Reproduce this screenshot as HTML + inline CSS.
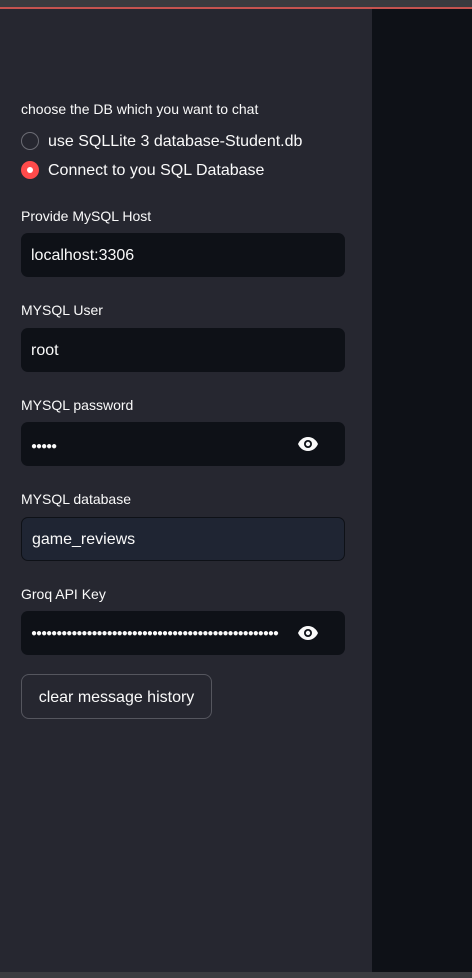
<!DOCTYPE html>
<html><head><style>
*{margin:0;padding:0;box-sizing:border-box}
body{width:472px;height:978px;background:#0e1117;font-family:"Liberation Sans",sans-serif;position:relative;overflow:hidden;color:#fafafa}
.top{position:absolute;left:0;top:0;width:472px;height:7px;background:#3a3b3f}
.red{position:absolute;left:0;top:7px;width:472px;height:2px;background:#c5534f}
.side{position:absolute;left:0;top:9px;width:372px;height:963px;background:#262730}
.bot{position:absolute;left:0;top:972px;width:472px;height:6px;background:#3b3c40}
.lbl{position:absolute;left:21px;font-size:14px;color:#fafafa}
.in{position:absolute;left:21px;width:324px;height:44px;background:#0e1117;border-radius:7px;font-size:16px;line-height:46px;padding-left:10px;color:#fafafa}
.radio{position:absolute;left:21px;width:18px;height:18px;border-radius:50%}
.rt{position:absolute;left:48px;font-size:16px}
.eye{position:absolute;right:26px;top:14px}
.dots{font-size:10px;letter-spacing:-1px}
</style></head><body>
<div class="top"></div><div class="red"></div>
<div class="side"></div>
<div class="bot"></div>
<div class="lbl" style="top:101px">choose the DB which you want to chat</div>
<div class="radio" style="top:132px;border:1px solid #6b6c74"></div>
<div class="rt" style="top:133px">use SQLLite 3 database-Student.db</div>
<div class="radio" style="top:161px;background:#ff4b4b"><div style="position:absolute;left:6px;top:6px;width:6px;height:6px;border-radius:50%;background:#fff"></div></div>
<div class="rt" style="top:162px">Connect to you SQL Database</div>
<div class="lbl" style="top:208px">Provide MySQL Host</div>
<div class="in" style="top:233px">localhost:3306</div>
<div class="lbl" style="top:302px">MYSQL User</div>
<div class="in" style="top:328px">root</div>
<div class="lbl" style="top:397px">MYSQL password</div>
<div class="in" style="top:422px"><span class="dots">●●●●●</span>
<svg class="eye" width="22" height="16" viewBox="0 0 22 16"><path d="M11 1C6 1 2.5 4.5 1 8c1.5 3.5 5 7 10 7s8.5-3.5 10-7C19.5 4.5 16 1 11 1z" fill="#fafafa"/><circle cx="11" cy="8" r="4" fill="#0e1117"/><circle cx="11" cy="8" r="2.2" fill="#fafafa"/></svg></div>
<div class="lbl" style="top:491px">MYSQL database</div>
<div class="in" style="top:517px;background:#1f2533;border:1px solid #0e1117;line-height:44px">game_reviews</div>
<div class="lbl" style="top:586px">Groq API Key</div>
<div class="in" style="top:611px;overflow:hidden"><span class="dots" style="display:inline-block;width:248px;overflow:hidden;white-space:nowrap;vertical-align:top">●●●●●●●●●●●●●●●●●●●●●●●●●●●●●●●●●●●●●●●●●●●●●●●●●●●●</span>
<svg class="eye" width="22" height="16" viewBox="0 0 22 16"><path d="M11 1C6 1 2.5 4.5 1 8c1.5 3.5 5 7 10 7s8.5-3.5 10-7C19.5 4.5 16 1 11 1z" fill="#fafafa"/><circle cx="11" cy="8" r="4" fill="#0e1117"/><circle cx="11" cy="8" r="2.2" fill="#fafafa"/></svg></div>
<div style="position:absolute;left:21px;top:674px;width:191px;height:45px;border:1px solid #55565e;border-radius:8px;background:#262730;font-size:16px;line-height:45px;text-align:center">clear message history</div>
</body></html>
